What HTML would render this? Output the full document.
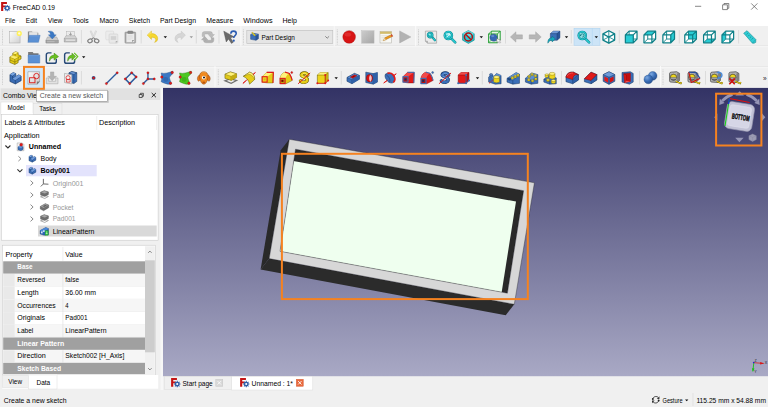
<!DOCTYPE html>
<html lang="en"><head><meta charset="utf-8"><title>FreeCAD 0.19</title>
<style>
html,body{margin:0;padding:0;background:#f0f0f0;overflow:hidden}
body{width:768px;height:407px;font-family:'Liberation Sans', 'DejaVu Sans', sans-serif;}
svg{display:block;font-family:'Liberation Sans', 'DejaVu Sans', sans-serif;}
text{white-space:pre}
</style></head><body>
<svg width="768" height="407" viewBox="0 0 768 407">
<defs>
<linearGradient id="bg3d" x1="0" y1="0" x2="0" y2="1"><stop offset="0" stop-color="#333365"/><stop offset="1" stop-color="#a9a9c5"/></linearGradient>
</defs>
<rect x="0" y="0" width="768" height="407" fill="#f0f0f0"/>
<g id="titlebar">
<rect x="0" y="0" width="768" height="26" fill="#ffffff"/>
<g transform="translate(0.8 1.7) scale(0.3063)"><path d="M1 1h19v6.500h-12v5h8v6h-8v11.500h-7z" fill="#c41414"/><g transform="translate(21 21)"><circle r="7.800" fill="#2f5fa8"/><path d="M0-10.500v21M-10.500 0h21M-7.400-7.400l14.800 14.800M7.400-7.400l-14.800 14.800" stroke="#2f5fa8" stroke-width="3.400"/><circle r="3.400" fill="#fff"/></g></g>
<text x="12.8" y="9.6" font-size="7.2" fill="#000" textLength="42.2" lengthAdjust="spacingAndGlyphs">FreeCAD 0.19</text>
<line x1="695" y1="6.3" x2="701.2" y2="6.3" stroke="#555" stroke-width="0.7"/>
<path d="M722.6 4.8h4.8v4.8h-4.8z M724 4.8v-1.3h4.8v4.8h-1.4" fill="none" stroke="#555" stroke-width="0.7"/>
<path d="M751.2 3.4l6.2 6.2M757.4 3.4l-6.2 6.2" fill="none" stroke="#555" stroke-width="0.7"/>
</g>
<g id="menubar">
<text x="5.0" y="22.5" font-size="7.2" fill="#000" textLength="10.3" lengthAdjust="spacingAndGlyphs">File</text>
<text x="25.8" y="22.5" font-size="7.2" fill="#000" textLength="11.2" lengthAdjust="spacingAndGlyphs">Edit</text>
<text x="47.8" y="22.5" font-size="7.2" fill="#000" textLength="14.7" lengthAdjust="spacingAndGlyphs">View</text>
<text x="72.8" y="22.5" font-size="7.2" fill="#000" textLength="15.9" lengthAdjust="spacingAndGlyphs">Tools</text>
<text x="99.5" y="22.5" font-size="7.2" fill="#000" textLength="19.2" lengthAdjust="spacingAndGlyphs">Macro</text>
<text x="128.8" y="22.5" font-size="7.2" fill="#000" textLength="21.2" lengthAdjust="spacingAndGlyphs">Sketch</text>
<text x="160.0" y="22.5" font-size="7.2" fill="#000" textLength="36.0" lengthAdjust="spacingAndGlyphs">Part Design</text>
<text x="206.3" y="22.5" font-size="7.2" fill="#000" textLength="27.0" lengthAdjust="spacingAndGlyphs">Measure</text>
<text x="243.3" y="22.5" font-size="7.2" fill="#000" textLength="29.2" lengthAdjust="spacingAndGlyphs">Windows</text>
<text x="282.5" y="22.5" font-size="7.2" fill="#000" textLength="14.5" lengthAdjust="spacingAndGlyphs">Help</text>
</g>
<g id="toolbars">
<line x1="0" y1="45.9" x2="768" y2="45.9" stroke="#dcdcdc" stroke-width="0.6"/>
<line x1="0" y1="46.6" x2="768" y2="46.6" stroke="#fbfbfb" stroke-width="0.7"/>
<line x1="0" y1="66.9" x2="768" y2="66.9" stroke="#dcdcdc" stroke-width="0.6"/>
<line x1="0" y1="67.6" x2="768" y2="67.6" stroke="#fbfbfb" stroke-width="0.7"/>
<line x1="2.5" y1="29.5" x2="2.5" y2="44.5" stroke="#bcbcbc" stroke-width="0.8" stroke-dasharray="0.8 0.8"/>
<g transform="translate(8.65 30.3) scale(0.4156)"><defs><linearGradient id="gnew" x1="0" y1="0" x2="1" y2="1"><stop offset="0" stop-color="#fcfcfc"/><stop offset="1" stop-color="#d0d0d0"/></linearGradient></defs><rect x="2.500" y="3" width="25" height="27.500" fill="url(#gnew)" stroke="#b0b0b0" stroke-width="1.400"/><circle cx="25.500" cy="7.500" r="6.200" fill="#fff15a"/><circle cx="25.500" cy="7.500" r="2.800" fill="#fffbd8"/></g>
<g transform="translate(27.05 30.3) scale(0.4156)"><path d="M2 3h10l2 3h13v20h-25z" fill="#858585"/><path d="M5 4.500h20v12h-20z" fill="#f4f4f4" stroke="#bcbcbc" stroke-width=".8"/><path d="M6 7h18M6 9.500h18" stroke="#c8c8c8" stroke-width=".8"/><path d="M5.500 12h26l-4 17h-25.500z" fill="#5b90d4" stroke="#3a6db0" stroke-width="1"/><path d="M6.500 13.500h23" stroke="#8ab4ea" stroke-width="1"/></g>
<g transform="translate(45.45 30.3) scale(0.4156)"><path d="M5 16h22l4 8v6.500h-30v-6.500z" fill="#cacaca" stroke="#8e8e8e" stroke-width="1"/><rect x="1.500" y="24" width="29" height="6.500" fill="#a4a4a4" stroke="#868686" stroke-width=".8"/><path d="M4 27.500h18" stroke="#d8d8d8" stroke-width="1.200"/><path d="M6 3c9-3 15 1 15 8h5l-9.500 10l-9.500-10h5c0-4-1.500-6.500-6-8z" fill="#3b78c4" stroke="#2a5a9a" stroke-width=".8"/></g>
<g transform="translate(63.85 30.3) scale(0.4156)"><rect x="7" y="3" width="18" height="12" fill="#ececec" stroke="#a8a8a8" stroke-width="1"/><path d="M16 5v6.500M12.500 8.500l3.500 3.500l3.500-3.500" stroke="#8a8a8a" stroke-width="1.800" fill="none"/><path d="M5 13h22l4 7v8h-30v-8z" fill="#d4d4d4" stroke="#969696" stroke-width="1"/><rect x="1.500" y="20" width="29" height="8" fill="#c0c0c0" stroke="#969696" stroke-width=".8"/><rect x="5" y="22.500" width="22" height="2.200" fill="#f2f2f2"/></g>
<line x1="81.4" y1="30" x2="81.4" y2="43.5" stroke="#d2d2d2" stroke-width="0.7"/>
<g transform="translate(86.7 30.3) scale(0.4156)"><path d="M8 2l3-1l8 19l-3 1z" fill="#e0e0e0" stroke="#c0c0c0" stroke-width=".8"/><path d="M24 2l-3-1l-8 19l3 1z" fill="#e6e6e6" stroke="#c0c0c0" stroke-width=".8"/><ellipse cx="8" cy="25.500" rx="5.500" ry="4.500" transform="rotate(-25 8 25.500)" fill="none" stroke="#7e7e7e" stroke-width="2.800"/><ellipse cx="24" cy="25.500" rx="5.500" ry="4.500" transform="rotate(25 24 25.500)" fill="none" stroke="#7e7e7e" stroke-width="2.800"/><path d="M12 21l4-3l4 3" stroke="#7e7e7e" stroke-width="2.400" fill="none"/></g>
<g transform="translate(104.95 30.3) scale(0.4156)"><rect x="2" y="2" width="19" height="21" rx="2" fill="#ececec" stroke="#d2d2d2" stroke-width="1.200"/><rect x="10" y="9" width="21" height="22" rx="2" fill="#e8e8e8" stroke="#cacaca" stroke-width="1.200"/><rect x="14" y="14" width="13" height="9" fill="#d2d2d2"/><path d="M31 26l-5 5v-5z" fill="#b0b0b0"/></g>
<g transform="translate(123.65 30.3) scale(0.4156)"><rect x="3" y="4" width="26" height="27" rx="2" fill="#a4a4a4" stroke="#8c8c8c" stroke-width="1"/><rect x="6.500" y="8" width="19" height="20.500" fill="#ebebeb" stroke="#c8c8c8" stroke-width=".8"/><path d="M9 13h13M9 16h13M9 19h13M9 22h8" stroke="#d4d4d4" stroke-width="1"/><path d="M25.500 23.500l-5 5v-5z" fill="#909090"/><rect x="10" y="1.500" width="12" height="6" rx="1.500" fill="#8a8a8a" stroke="#6e6e6e" stroke-width=".8"/></g>
<line x1="141.2" y1="30" x2="141.2" y2="43.5" stroke="#d2d2d2" stroke-width="0.7"/>
<g transform="translate(146.05 30.3) scale(0.4156)"><path d="M3 11.500l10-9.500v6c9 0 15 5 15 12c0 5-3 8-7.500 9c2-2 3-4 3-6c0-4-4-6.500-10.500-6.500v5.500z" fill="#f6d830" stroke="#d0aa00" stroke-width="1"/><path d="M5 11.500l7-6.500v4" fill="none" stroke="#fff4a0" stroke-width="1.200"/></g>
<path d="M163.60000000000002 36.300000000000004h3.4l-1.7 1.9z" fill="#111"/>
<g transform="translate(173.35 30.3) scale(0.4156)"><path d="M29 11.500l-10-9.500v6c-9 0-15 5-15 12c0 5 3 8 7.500 9c-2-2-3-4-3-6c0-4 4-6.500 10.500-6.500v5.500z" fill="#d6d6d6" stroke="#c0c0c0" stroke-width="1"/></g>
<path d="M189.60000000000002 36.300000000000004h3.4l-1.7 1.9z" fill="#9a9a9a"/>
<line x1="196.3" y1="30" x2="196.3" y2="43.5" stroke="#d2d2d2" stroke-width="0.7"/>
<g transform="translate(201.35 30.3) scale(0.4156)"><path d="M2 15V9Q2 3 8 3H21Q27 3 27 9V10H31.500L24 18.500L16.500 10H21V9.500Q21 9 20.500 9H8.500Q8 9 8 9.500V15Z" fill="#bcbcbc" stroke="#a0a0a0" stroke-width=".8"/><path d="M2 15V9Q2 3 8 3H21Q27 3 27 9V10H31.500L24 18.500L16.500 10H21V9.500Q21 9 20.500 9H8.500Q8 9 8 9.500V15Z" transform="rotate(180 16 16.500)" fill="#b0b0b0" stroke="#989898" stroke-width=".8"/></g>
<line x1="219" y1="30" x2="219" y2="43.5" stroke="#d2d2d2" stroke-width="0.7"/>
<g transform="translate(223.35 30.3) scale(0.4156)"><path d="M1 2l6 26l5.500-7l7 10.500l4.500-3l-7-10.500l8.500-2.500z" fill="#6a6a6a" stroke="#484848" stroke-width="1"/><path d="M18 8.500c0-4.500 3-6.500 6.500-6.500c4 0 6.500 2.500 6.500 6c0 5-6 5-6 10.500" fill="none" stroke="#2c5cb0" stroke-width="3.800"/><circle cx="25" cy="25" r="2.600" fill="#2c5cb0"/></g>
<line x1="240.9" y1="26" x2="240.9" y2="46.3" stroke="#fdfdfd" stroke-width="0.8"/>
<line x1="243.4" y1="29.5" x2="243.4" y2="44.5" stroke="#bcbcbc" stroke-width="0.8" stroke-dasharray="0.8 0.8"/>
<rect x="246.8" y="30.3" width="86" height="13.4" fill="#e5e5e5" stroke="#bdbdbd" stroke-width="0.6"/>
<g transform="translate(250.3 32.3) scale(0.2687)"><path d="M1 9l9-5l20 3v17l-9 6l-20-4z" fill="#3b6fb8" stroke="#1f3f70" stroke-width="1.500"/><path d="M1 9l20 4l9-6l-20-3z" fill="#5b8fd4" stroke="#1f3f70" stroke-width="1"/><path d="M21 13v17" stroke="#1f3f70" stroke-width="1.500"/><path d="M5 1l4-1l10 10l-1 4l-4-1z" fill="#f0d820" stroke="#8a7a00" stroke-width="1"/><path d="M21 13l9-6v17l-9 6z" fill="#2a5596"/></g>
<text x="261.5" y="39.5" font-size="7.2" fill="#000" textLength="33.4" lengthAdjust="spacingAndGlyphs">Part Design</text>
<path d="M325.3 36.3l1.9 1.9l1.9-1.9" fill="none" stroke="#444" stroke-width="0.6"/>
<line x1="334.2" y1="26" x2="334.2" y2="46.3" stroke="#fdfdfd" stroke-width="0.8"/>
<line x1="337.3" y1="29.5" x2="337.3" y2="44.5" stroke="#bcbcbc" stroke-width="0.8" stroke-dasharray="0.8 0.8"/>
<g transform="translate(342.5 30.3) scale(0.4156)"><circle cx="16" cy="16" r="15.200" fill="#d81414" stroke="#a80c0c" stroke-width="1"/><ellipse cx="13" cy="10" rx="8" ry="5" fill="#e83a3a" opacity=".6"/></g>
<g transform="translate(361.2 30.3) scale(0.4156)"><defs><linearGradient id="gstop" x1="0" y1="0" x2="1" y2="1"><stop offset="0" stop-color="#cccccc"/><stop offset="1" stop-color="#a6a6a6"/></linearGradient></defs><rect x="1" y="1" width="30" height="30" fill="url(#gstop)" stroke="#bdbdbd" stroke-width="1"/></g>
<g transform="translate(379.6 30.3) scale(0.4156)"><rect x="1" y="3" width="28" height="27.500" fill="#f8f8f4" stroke="#aaa8a0" stroke-width="1.200"/><rect x="1" y="3" width="28" height="5.500" fill="#d2bc6c"/><path d="M4 13h21M4 17h21M4 21h14M4 25h12" stroke="#cfcab6" stroke-width="1"/><path d="M9 25l3.500-7l17-8l2 4.500l-17 8z" fill="#ec9a1c" stroke="#9a5c10" stroke-width="1"/><path d="M9 25l3.500-7l2 4.500z" fill="#f2dcb4"/><path d="M27 11l2.500-1l2 4.500l-2.500 1z" fill="#d43c3c"/></g>
<g transform="translate(398.4 30.3) scale(0.4156)"><path d="M3 1.500l27 14.500l-27 14.500z" fill="#b2b2b2" stroke="#a2a2a2" stroke-width="1"/></g>
<line x1="415.7" y1="26" x2="415.7" y2="46.3" stroke="#fdfdfd" stroke-width="0.8"/>
<line x1="418.5" y1="29.5" x2="418.5" y2="44.5" stroke="#bcbcbc" stroke-width="0.8" stroke-dasharray="0.8 0.8"/>
<g transform="translate(424.55 30.3) scale(0.4156)"><path d="M2 2h27v29h-22l-5-5z" fill="#ececec" stroke="#8e8e8e" stroke-width="1.400"/><path d="M2 26h5v5" fill="#bbb" stroke="#8e8e8e" stroke-width="1"/><path d="M17.7 15.7L25 24" stroke="#0e8088" stroke-width="5.2" stroke-linecap="round"/><path d="M17.7 15.7L25 24" stroke="#28c8d0" stroke-width="3.0" stroke-linecap="round"/><circle cx="13.5" cy="11.5" r="6" fill="#34ccd4" stroke="#0e8088" stroke-width="4.2"/><circle cx="13.5" cy="11.5" r="6" fill="none" stroke="#28c8d0" stroke-width="2.2"/><ellipse cx="12.0" cy="9.4" rx="2.7" ry="1.8" fill="#a8f0f4" opacity=".8"/></g>
<g transform="translate(443.15 30.3) scale(0.4156)"><path d="M18.9 18.9L29 29" stroke="#0e8088" stroke-width="6.2" stroke-linecap="round"/><path d="M18.9 18.9L29 29" stroke="#28c8d0" stroke-width="4.0" stroke-linecap="round"/><circle cx="12.5" cy="12.5" r="9" fill="#34ccd4" stroke="#0e8088" stroke-width="5.2"/><circle cx="12.5" cy="12.5" r="9" fill="none" stroke="#28c8d0" stroke-width="3.2"/><ellipse cx="10.2" cy="9.3" rx="4.0" ry="2.7" fill="#a8f0f4" opacity=".8"/><path d="M8 17l8-8M16.500 8.500h-5M16.500 8.500v5" stroke="#fff" stroke-width="2" fill="none"/></g>
<g transform="translate(461.75 30.3) scale(0.4156)"><path d="M16 0.500l14 7.800v15.400l-14 7.800l-14-7.800v-15.400z" fill="#2cc8d0" stroke="#0a8088" stroke-width="1.400"/><path d="M16 0.500l14 7.800l-14 7.700l-14-7.700z" fill="#62dce2"/><circle cx="16" cy="16" r="9.500" fill="none" stroke="#b01414" stroke-width="3.600"/><path d="M9.300 9.300l13.400 13.400" stroke="#b01414" stroke-width="3.600"/></g>
<path d="M479.6 36.300000000000004h3.4l-1.7 1.9z" fill="#111"/>
<g transform="translate(487.75 30.3) scale(0.4156)"><path d="M2 9l7-7h21v21l-7 7h-21z" fill="#e4f4e4" stroke="#189a28" stroke-width="2.200"/><path d="M9 2v21h21M9 23l-7 7" fill="none" stroke="#189a28" stroke-width="1.400"/><path d="M2 9h21v21M23 9l7-7" fill="none" stroke="#189a28" stroke-width="2.200"/><path d="M6 13c3-5 13-5 16 0c2 4 1 11-4 13c-5 1-11-1-12-5c-1-3-1-6 0-8z" fill="#3568b4" stroke="#1f3f70" stroke-width="1"/><ellipse cx="12" cy="14" rx="4" ry="2.500" fill="#6f9ad8" opacity=".7"/><path d="M21 20l2.500 11l2.500-3.500l3 3.500l2-2l-3-3.500l3.500-2z" fill="#fff" stroke="#444" stroke-width=".8"/></g>
<line x1="505.5" y1="30" x2="505.5" y2="43.5" stroke="#d2d2d2" stroke-width="0.7"/>
<g transform="translate(509.75 30.3) scale(0.4156)"><path d="M1.500 16l13.500-12.500v7.500h15.500v10h-15.500v7.500z" fill="#b6b6b6" stroke="#a6a6a6" stroke-width="1"/></g>
<g transform="translate(528.55 30.3) scale(0.4156)"><path d="M30.500 16l-13.500-12.500v7.500h-15.500v10h15.500v7.500z" fill="#b6b6b6" stroke="#a6a6a6" stroke-width="1"/></g>
<g transform="translate(547.05 30.3) scale(0.4156)"><path d="M8 8l7-6h16v16l-7 6h-16z" fill="#3b6fb8" stroke="#1f3f70" stroke-width="1.200"/><path d="M8 8l7-6h16l-7 6z" fill="#6f9ad8"/><path d="M24 8l7-6v16l-7 6z" fill="#2a5596"/><path d="M8 8h16v16M24 8l7-6" fill="none" stroke="#1f3f70" stroke-width="1.200"/><path d="M2 31c-1-8 3-13 10-13v-4l8 7l-8 7v-4c-4 0-7 2-10 7z" fill="#18a8bc" stroke="#0a6070" stroke-width="1"/></g>
<path d="M564.8 36.300000000000004h3.4l-1.7 1.9z" fill="#111"/>
<line x1="571.3" y1="30" x2="571.3" y2="43.5" stroke="#d2d2d2" stroke-width="0.7"/>
<rect x="574" y="28.3" width="26" height="17" fill="#cce4f7" stroke="#a8d0f0" stroke-width="0.5"/>
<line x1="592.3" y1="28.5" x2="592.3" y2="45" stroke="#a8d0f0" stroke-width="0.5"/>
<g transform="translate(577.05 30.3) scale(0.4156)"><path d="M18.9 18.9L29 29" stroke="#0e8088" stroke-width="6.2" stroke-linecap="round"/><path d="M18.9 18.9L29 29" stroke="#28c8d0" stroke-width="4.0" stroke-linecap="round"/><circle cx="12.5" cy="12.5" r="9" fill="#8adce2" stroke="#0e8088" stroke-width="5.2"/><circle cx="12.5" cy="12.5" r="9" fill="none" stroke="#28c8d0" stroke-width="3.2"/><ellipse cx="10.2" cy="9.3" rx="4.0" ry="2.7" fill="#a8f0f4" opacity=".8"/><path d="M8.500 12.500a4 4 0 1 1 4 4" stroke="#0a7078" stroke-width="1.800" fill="none"/><path d="M6 11l2.500 3.500l2.500-3.500z" fill="#0a7078"/></g>
<path d="M594.5999999999999 36.300000000000004h3.4l-1.7 1.9z" fill="#111"/>
<g transform="translate(602.15 30.3) scale(0.4156)"><path d="M16 1l14 7.500v15l-14 7.500l-14-7.500v-15z" fill="#fff" stroke="#0e8088" stroke-width="3.200" stroke-linejoin="round"/><path d="M2 8.500l14 7.500l14-7.500M16 16v15" fill="none" stroke="#0e8088" stroke-width="3"/><path d="M16 1v15M2 23.500l14-7.500l14 7.500" fill="none" stroke="#0e8088" stroke-width="2"/></g>
<line x1="619.3" y1="30" x2="619.3" y2="43.5" stroke="#d2d2d2" stroke-width="0.7"/>
<g transform="translate(624.55 30.3) scale(0.4156)"><path d="M2 11l9-9h19v19l-9 9h-19z" fill="#ffffff"/><path d="M11 2v19h19M11 21l-9 9" fill="none" stroke="#0e8088" stroke-width="2.200"/><path d="M2 11h19v19h-19z" fill="#28ccd4"/><path d="M2 11l9-9h19v19l-9 9h-19z M2 11h19v19M21 11l9-9" fill="none" stroke="#0e8088" stroke-width="3" stroke-linejoin="round"/></g>
<g transform="translate(643.15 30.3) scale(0.4156)"><path d="M2 11l9-9h19v19l-9 9h-19z" fill="#ffffff"/><path d="M11 2v19h19M11 21l-9 9" fill="none" stroke="#0e8088" stroke-width="2.200"/><path d="M2 11l9-9h19l-9 9z" fill="#28ccd4"/><path d="M2 11l9-9h19v19l-9 9h-19z M2 11h19v19M21 11l9-9" fill="none" stroke="#0e8088" stroke-width="3" stroke-linejoin="round"/></g>
<g transform="translate(662.05 30.3) scale(0.4156)"><path d="M2 11l9-9h19v19l-9 9h-19z" fill="#ffffff"/><path d="M11 2v19h19M11 21l-9 9" fill="none" stroke="#0e8088" stroke-width="2.200"/><path d="M21 11l9-9v19l-9 9z" fill="#28ccd4"/><path d="M2 11l9-9h19v19l-9 9h-19z M2 11h19v19M21 11l9-9" fill="none" stroke="#0e8088" stroke-width="3" stroke-linejoin="round"/></g>
<line x1="679.3" y1="30" x2="679.3" y2="43.5" stroke="#d2d2d2" stroke-width="0.7"/>
<g transform="translate(683.95 30.3) scale(0.4156)"><path d="M2 11l9-9h19v19l-9 9h-19z" fill="#ffffff"/><path d="M11 2h19v19h-19z" fill="#28ccd4"/><path d="M11 2v19h19M11 21l-9 9" fill="none" stroke="#0e8088" stroke-width="2.200"/><path d="M2 11l9-9h19v19l-9 9h-19z M2 11h19v19M21 11l9-9" fill="none" stroke="#0e8088" stroke-width="3" stroke-linejoin="round"/></g>
<g transform="translate(702.75 30.3) scale(0.4156)"><path d="M2 11l9-9h19v19l-9 9h-19z" fill="#ffffff"/><path d="M2 30l9-9h19l-9 9z" fill="#28ccd4"/><path d="M11 2v19h19M11 21l-9 9" fill="none" stroke="#0e8088" stroke-width="2.200"/><path d="M2 11l9-9h19v19l-9 9h-19z M2 11h19v19M21 11l9-9" fill="none" stroke="#0e8088" stroke-width="3" stroke-linejoin="round"/></g>
<g transform="translate(721.15 30.3) scale(0.4156)"><path d="M2 11l9-9h19v19l-9 9h-19z" fill="#ffffff"/><path d="M2 11l9-9v19l-9 9z" fill="#28ccd4"/><path d="M11 2v19h19M11 21l-9 9" fill="none" stroke="#0e8088" stroke-width="2.200"/><path d="M2 11l9-9h19v19l-9 9h-19z M2 11h19v19M21 11l9-9" fill="none" stroke="#0e8088" stroke-width="3" stroke-linejoin="round"/></g>
<line x1="738.6" y1="30" x2="738.6" y2="43.5" stroke="#d2d2d2" stroke-width="0.7"/>
<g transform="translate(743.3 30.3) scale(0.4156)"><path d="M1 7l8-6l21 21v7l-4 2h-4z" fill="#30ccd4" stroke="#0e8a92" stroke-width="1.400"/><path d="M22 31l8-9" stroke="#0e8a92" stroke-width="1"/><path d="M11 7l-3 3M15 11l-3 3M19 15l-3 3M23 19l-3 3" stroke="#0e6a72" stroke-width="1.300"/></g>
<line x1="2.5" y1="49.5" x2="2.5" y2="64.5" stroke="#bcbcbc" stroke-width="0.8" stroke-dasharray="0.8 0.8"/>
<g transform="translate(9 50.8) scale(0.4156)"><path d="M2 15l7-4v-5l7-4l6 2.500v5l7 3v7l-7 4v5l-8 4.500l-12-5z" fill="#e4cc18" stroke="#5e5200" stroke-width="1.300"/><path d="M9 6l6 2.500l7-4M15 8.500v5.500M2 15l12 5l8-4.500M14 20v13M9 11l6 3M22 15.500l7-3M2 22l12 5l8-4M22 15v8" fill="none" stroke="#5e5200" stroke-width="1"/><path d="M9 6l7-4l6 2.500l-7 4z" fill="#fff27a"/><path d="M2 15l7-4l13 4.500l-8 4.500z" fill="#fff27a" opacity=".85"/></g>
<g transform="translate(27.3 50.8) scale(0.4156)"><path d="M2 3h11l2 3h12v8h-25z" fill="#7a7a7a"/><path d="M2 10h28v19.500h-28z" fill="#5b90d4" stroke="#3a6db0" stroke-width="1"/><path d="M3 11.500h26" stroke="#8ab4ea" stroke-width="1"/></g>
<g transform="translate(45.7 50.8) scale(0.4156)"><path d="M14 5h-8a4.500 4.500 0 0 0-4.500 4.500v16a4.500 4.500 0 0 0 4.500 4.500h15a4.500 4.500 0 0 0 4.500-4.500v-6" fill="none" stroke="#284a78" stroke-width="3.400"/><path d="M9 25c-1-10 4-14 11-14v-5.500l11 8.500l-11 8.500v-5.500c-5 0-8 2-11 8z" fill="#68c020" stroke="#3a7a10" stroke-width="1"/></g>
<g transform="translate(64 50.8) scale(0.4156)"><path d="M14 5h-8a4.500 4.500 0 0 0-4.500 4.500v16a4.500 4.500 0 0 0 4.500 4.500h15a4.500 4.500 0 0 0 4.500-4.500v-6" fill="none" stroke="#284a78" stroke-width="3.400"/><path d="M9 25c-1-10 4-14 10-14v-5.500l9 8.500l-9 8.500v-5.500c-4 0-7 2-10 8z" fill="#68c020" stroke="#3a7a10" stroke-width="1"/><path d="M24.500 5l8.500 9l-8.500 9" fill="none" stroke="#68c020" stroke-width="3"/></g>
<path d="M82.0 56.300000000000004h3.4l-1.7 1.9z" fill="#111"/>
<line x1="2.5" y1="69.5" x2="2.5" y2="85.5" stroke="#bcbcbc" stroke-width="0.8" stroke-dasharray="0.8 0.8"/>
<rect x="24.6" y="67.6" width="18.8" height="20.4" fill="#d3e7f8"/>
<g transform="translate(8.7 71.3) scale(0.4156)"><path d="M3 8l8-5l6 2.500v7l7-4l6 3v11l-14 8l-13-6z" fill="#3a6cb4" stroke="#12305c" stroke-width="1.400"/><path d="M3 8l6 3l8-5.500M9 11v7l7 3.500l8-4.500M16 21.500v9M9 18l8-5.500" fill="none" stroke="#12305c" stroke-width="1.100"/><path d="M3 8l8-5l6 2.500l-8 5.500z" fill="#78a4e0"/><path d="M9 18l8-5.500l7-4l6 3l-14 10z" fill="#6f9ad8"/></g>
<g transform="translate(27.1 71.3) scale(0.4156)"><defs><linearGradient id="gsk" x1="0" y1="0" x2="1" y2="1"><stop offset="0" stop-color="#fbfbfb"/><stop offset="1" stop-color="#cccccc"/></linearGradient></defs><path d="M2 1h28v24l-6 6h-22z" fill="url(#gsk)" stroke="#8e8e8e" stroke-width="1.300"/><path d="M30 25h-6v6z" fill="#777" stroke="#666" stroke-width=".6"/><rect x="6" y="15.500" width="13" height="12" fill="none" stroke="#d81c1c" stroke-width="2.200"/><circle cx="22.500" cy="11.500" r="6.500" fill="none" stroke="#d81c1c" stroke-width="2.200"/></g>
<g transform="translate(45.5 71.3) scale(0.4156)"><path d="M12 1.500h8v10.500h6.500l-10.500 10.500l-10.500-10.500h6.500z" fill="#b4b4b4" stroke="#9e9e9e" stroke-width="1"/><path d="M2 16v14h28v-14h-5.500v8h-17v-8z" fill="#e2e2e2" stroke="#a4a4a4" stroke-width="1.300"/></g>
<g transform="translate(63.9 71.3) scale(0.4156)"><path d="M12 4l7-3.500l12 3v21l-7 5l-12-3z" fill="#3b6fb8" stroke="#12305c" stroke-width="1.200"/><path d="M12 4l12 3.500l7-4l-12-3z" fill="#6f9ad8" stroke="#12305c" stroke-width="1"/><path d="M24 7.500v22" stroke="#12305c" stroke-width="1"/><path d="M1.500 5l17.500 3.500v22l-17.500-3.500z" fill="#f0f0f0" stroke="#8a8a8a" stroke-width="1.200"/><circle cx="10" cy="15.500" r="5" fill="none" stroke="#d81818" stroke-width="1.800"/><path d="M6 19.500h9v6.500h-9z" fill="none" stroke="#d81818" stroke-width="1.600"/></g>
<line x1="81.4" y1="71" x2="81.4" y2="84.5" stroke="#d2d2d2" stroke-width="0.7"/>
<g transform="translate(86.75 71.3) scale(0.4156)"><circle cx="16.500" cy="16" r="4.600" fill="#2e5c9e"/><circle cx="16.5" cy="16" r="2.8" fill="#e41a1a" stroke="#8a0a0a" stroke-width=".7"/></g>
<g transform="translate(105.15 71.3) scale(0.4156)"><path d="M3 29.500l26-26" stroke="#2e5c9e" stroke-width="3.200"/><circle cx="3" cy="29.5" r="2.7" fill="#e41a1a" stroke="#8a0a0a" stroke-width=".7"/><circle cx="29" cy="3.5" r="2.7" fill="#e41a1a" stroke="#8a0a0a" stroke-width=".7"/></g>
<g transform="translate(123.55 71.3) scale(0.4156)"><path d="M4.300 18.500l15.200-15l10.800 10l-15.400 16z" fill="none" stroke="#2e5c9e" stroke-width="3.600"/><circle cx="4.3" cy="18.5" r="2.7" fill="#e41a1a" stroke="#8a0a0a" stroke-width=".7"/><circle cx="19.5" cy="3.5" r="2.7" fill="#e41a1a" stroke="#8a0a0a" stroke-width=".7"/><circle cx="30.3" cy="13.5" r="2.7" fill="#e41a1a" stroke="#8a0a0a" stroke-width=".7"/><circle cx="14.9" cy="29.5" r="2.7" fill="#e41a1a" stroke="#8a0a0a" stroke-width=".7"/></g>
<g transform="translate(141.95 71.3) scale(0.4156)"><path d="M14.400 18.500v-15M14.400 18.500l-11 11M14.400 18.500h15.200" stroke="#2e5c9e" stroke-width="3.200" fill="none"/><circle cx="14.4" cy="3.5" r="2.7" fill="#e41a1a" stroke="#8a0a0a" stroke-width=".7"/><circle cx="3.4" cy="29.5" r="2.7" fill="#e41a1a" stroke="#8a0a0a" stroke-width=".7"/><circle cx="29.6" cy="18.5" r="2.7" fill="#e41a1a" stroke="#8a0a0a" stroke-width=".7"/><circle cx="14.4" cy="18.5" r="2.7" fill="#e41a1a" stroke="#8a0a0a" stroke-width=".7"/></g>
<g transform="translate(160.35 71.3) scale(0.4156)"><path d="M2 4C10 7 20 3 30 0C32 8 22 11 22 15C22 20 26 24 26 31C18 32 9 29 2 25C4 18 4 11 2 4Z" fill="#3b78c4" stroke="#1f4a80" stroke-width="1"/><ellipse cx="13" cy="20" rx="6" ry="6" fill="#2a5aa0" opacity=".5"/><circle cx="28.5" cy="3" r="3" fill="#e41a1a" stroke="#8a0a0a" stroke-width=".7"/><circle cx="3.5" cy="14" r="3" fill="#e41a1a" stroke="#8a0a0a" stroke-width=".7"/><circle cx="24.5" cy="28.5" r="3" fill="#e41a1a" stroke="#8a0a0a" stroke-width=".7"/></g>
<g transform="translate(178.75 71.3) scale(0.4156)"><path d="M2 4C10 7 20 3 30 0C32 8 22 11 22 15C22 20 26 24 26 31C18 32 9 29 2 25C4 18 4 11 2 4Z" fill="#4cc820" stroke="#1a7a0a" stroke-width="1"/><ellipse cx="13" cy="20" rx="6" ry="6" fill="#30a010" opacity=".5"/><circle cx="28.5" cy="3" r="3" fill="#e41a1a" stroke="#8a0a0a" stroke-width=".7"/><circle cx="3.5" cy="14" r="3" fill="#e41a1a" stroke="#8a0a0a" stroke-width=".7"/><circle cx="24.5" cy="28.5" r="3" fill="#e41a1a" stroke="#8a0a0a" stroke-width=".7"/></g>
<g transform="translate(197.15 71.3) scale(0.4156)"><path d="M5 9c-5 4-6 11-2 15l5-3l2-9z" fill="#e87818" stroke="#7a3400" stroke-width="1"/><path d="M27 9c5 4 6 11 2 15l-5-3l-2-9z" fill="#e87818" stroke="#7a3400" stroke-width="1"/><path d="M16 1c7 0 11 5 10 12c-1 9-4 18-10 18s-9-9-10-18c-1-7 3-12 10-12z" fill="#f08a20" stroke="#7a3400" stroke-width="1"/><path d="M11 3c3-1.500 7-1.500 10 0" stroke="#f8b060" stroke-width="1.500" fill="none"/><ellipse cx="16" cy="15" rx="4.500" ry="4.500" fill="#fff"/><circle cx="16.500" cy="15" r="2.600" fill="#1a1a1a"/><ellipse cx="16" cy="27" rx="3.500" ry="2.500" fill="#b85410"/></g>
<line x1="215" y1="66" x2="215" y2="87.3" stroke="#fdfdfd" stroke-width="0.8"/>
<line x1="218.3" y1="69.5" x2="218.3" y2="85.5" stroke="#bcbcbc" stroke-width="0.8" stroke-dasharray="0.8 0.8"/>
<g transform="translate(224.1 71.3) scale(0.4156)"><path d="M2 23l13-5l15 4l-13 7z" fill="none" stroke="#707070" stroke-width="3"/><path d="M2 7l13-5.500l15 4.500v9l-13 7l-15-5z" fill="#e0c818" stroke="#5e5200" stroke-width="1.200"/><path d="M2 7l13-5.500l15 4.500l-13 6z" fill="#fff27a" stroke="#5e5200" stroke-width=".8"/><path d="M17 12v10" stroke="#5e5200" stroke-width="1"/><path d="M17 12l13-6v9l-13 7z" fill="#c4ac10"/></g>
<g transform="translate(242.5 71.3) scale(0.4156)"><path d="M1 29l30-26" stroke="#e01a1a" stroke-width="2.200"/><path d="M2 12l15-10c8 2 13 9 12 18l-12 11c-1-8-7-15-15-19z" fill="#e4cc18" stroke="#5e5200" stroke-width="1.200"/><path d="M2 12l15-10c8 2 13 9 12 18c-2-7-7-12-14-13z" fill="#fff27a" stroke="#5e5200" stroke-width=".8"/><path d="M1 29l7-6M25 8l6-5" stroke="#e01a1a" stroke-width="2.200"/></g>
<g transform="translate(260.9 71.3) scale(0.4156)"><path d="M3 13l11-10.500h16l-1 25.500h-14l-12-2z" fill="#e4cc18" stroke="#5e5200" stroke-width="1"/><path d="M3 13l11-10.500h16l-15 10.500z" fill="#fff27a"/><path d="M14 2.500h16l-1 25.500" fill="none" stroke="#e01a1a" stroke-width="2.600"/><rect x="3" y="13" width="12" height="13" fill="#f0d820" stroke="#e01a1a" stroke-width="2.600"/><rect x="6.500" y="17" width="5" height="5" fill="#d8b818"/></g>
<g transform="translate(279.3 71.3) scale(0.4156)"><path d="M2 17c1-8 5-13 12-15l10 3c3 5 6 11 7 17l-15 8h-14z" fill="#e4cc18" stroke="#5e5200" stroke-width="1"/><path d="M2 17c1-8 5-13 12-15l10 3c-5 2-8 7-9 12z" fill="#fff27a"/><path d="M14 2l10 3c3 5 6 11 7 17" fill="none" stroke="#e01a1a" stroke-width="2.600"/><rect x="2" y="17" width="12" height="12.500" fill="#b89c10" stroke="#e01a1a" stroke-width="2.600"/><rect x="5" y="20.500" width="5" height="5" fill="#7a0000"/><circle cx="30" cy="3" r="2.4" fill="#e41a1a" stroke="#8a0a0a" stroke-width=".7"/></g>
<g transform="translate(297.7 71.3) scale(0.4156)"><path d="M24 9C22 3 11 2 9 8C7 14 23 13 23 20C23 27 11 29 7 23" fill="none" stroke="#5e5200" stroke-width="8.400" stroke-linecap="round"/><path d="M24 9C22 3 11 2 9 8C7 14 23 13 23 20C23 27 11 29 7 23" fill="none" stroke="#e4cc18" stroke-width="6.200" stroke-linecap="round"/><path d="M22 7C19 3.500 12 3.500 10.500 7.500M21.500 18C20 15 14 14 11 12" fill="none" stroke="#fff27a" stroke-width="1.800" stroke-linecap="round"/><path d="M1 30l29-26" stroke="#e01a1a" stroke-width="2.400"/></g>
<g transform="translate(316.1 71.3) scale(0.4156)"><path d="M3 9l7-6h19v19l-7 7h-19z" fill="#ecd41c" stroke="#5e5200" stroke-width="1.200"/><path d="M3 9l7-6h19l-7 6z" fill="#fff27a"/><path d="M22 9l7-6v19l-7 7z" fill="#c8b010"/><path d="M3 9h19v20M22 9l7-6" fill="none" stroke="#5e5200" stroke-width="1"/><path d="M22 9v20M3 29h19l7-7" stroke="#e01a1a" stroke-width="1.800" fill="none"/><circle cx="22" cy="9" r="2.400" fill="#e01a1a"/><circle cx="3" cy="29" r="2.400" fill="#e01a1a"/><circle cx="22" cy="29" r="2.400" fill="#e01a1a"/><circle cx="29" cy="22" r="2.400" fill="#e01a1a"/></g>
<path d="M334.5 77.3h3.4l-1.7 1.9z" fill="#111"/>
<line x1="341.3" y1="71" x2="341.3" y2="84.5" stroke="#d2d2d2" stroke-width="0.7"/>
<g transform="translate(346.55 71.3) scale(0.4156)"><path d="M1 15l18-10l12 5v9l-18 11l-12-6z" fill="#3b6fb8" stroke="#12305c" stroke-width="1.200"/><path d="M1 15l18-10l12 5l-18 10z" fill="#5b8fd4" stroke="#12305c" stroke-width=".8"/><path d="M13 20v10" stroke="#12305c" stroke-width="1"/><path d="M13 20l18-10v9l-18 11z" fill="#2f60a8"/><path d="M9 14l10-5.500l6 2.500l-10 6z" fill="#e01a1a" stroke="#7a0000" stroke-width="1"/><path d="M12.500 13.500l6-3l2.500 1l-6 3.300z" fill="#8a0000"/></g>
<g transform="translate(364.95 71.3) scale(0.4156)"><path d="M2 2l18 3.500l10-2.500v23l-10 5l-18-4z" fill="#3b6fb8" stroke="#12305c" stroke-width="1.200"/><path d="M20 5.500v25.500" stroke="#12305c" stroke-width="1"/><path d="M20 5.500l10-2.500v23l-10 5z" fill="#2f60a8"/><ellipse cx="11" cy="16.500" rx="7.500" ry="9" fill="#d81414" stroke="#7a0000" stroke-width="1"/><path d="M13 9c4 2 5 12 0 16c-4-3-4-13 0-16z" fill="#f4c4c4"/></g>
<g transform="translate(383.35 71.3) scale(0.4156)"><path d="M1 28l30-22" stroke="#e01a1a" stroke-width="2.200"/><path d="M5 7c6-5 14-3 19 3c4 6 4 13 0 17c-5 3-12 0-16-6c-4-5-5-10-3-14z" fill="#3b6fb8" stroke="#12305c" stroke-width="1.200"/><path d="M10 5c6-2 13 1 16 7c3 6 2 11-2 15" fill="none" stroke="#e01a1a" stroke-width="4"/><path d="M5 7c4 2 8 6 10 11c1 4 1 7-1 9" fill="none" stroke="#12305c" stroke-width="1"/><path d="M1 28l9-6.500M24 11.500l7-5.500" stroke="#e01a1a" stroke-width="2.200"/></g>
<g transform="translate(401.75 71.3) scale(0.4156)"><path d="M3 13l11-10.500h16l-1 25.500h-14l-12-2z" fill="#e01a1a" stroke="#7a0000" stroke-width="1"/><path d="M3 13l11-10.500h16l-15 10.500z" fill="#f24a4a"/><path d="M14 2.500h16l-1 25.500" fill="none" stroke="#3b6fb8" stroke-width="2.400"/><rect x="3" y="13" width="12" height="13" fill="#c81414" stroke="#3b6fb8" stroke-width="2.600"/><rect x="6.500" y="17" width="5" height="5" fill="#12305c"/></g>
<g transform="translate(420.15 71.3) scale(0.4156)"><path d="M2 17c1-8 5-13 12-15l10 3c3 5 6 11 7 17l-15 8h-14z" fill="#e01a1a" stroke="#7a0000" stroke-width="1"/><path d="M2 17c1-8 5-13 12-15l10 3c-5 2-8 7-9 12z" fill="#f24a4a"/><path d="M14 2l10 3c3 5 6 11 7 17" fill="none" stroke="#3b6fb8" stroke-width="2.400"/><rect x="2" y="17" width="12" height="12.500" fill="#b81010" stroke="#3b6fb8" stroke-width="2.600"/><rect x="5" y="20.500" width="5" height="5" fill="#12305c"/><circle cx="30" cy="3" r="2.400" fill="#3b6fb8" stroke="#12305c" stroke-width=".7"/></g>
<g transform="translate(438.55 71.3) scale(0.4156)"><path d="M24 9C22 3 11 2 9 8C7 14 23 13 23 20C23 27 11 29 7 23" fill="none" stroke="#12305c" stroke-width="8.400" stroke-linecap="round"/><path d="M24 9C22 3 11 2 9 8C7 14 23 13 23 20C23 27 11 29 7 23" fill="none" stroke="#3b6fb8" stroke-width="6.200" stroke-linecap="round"/><path d="M22 7C19 3.500 12 3.500 10.500 7.500M21.500 18C20 15 14 14 11 12" fill="none" stroke="#7aa7e0" stroke-width="1.800" stroke-linecap="round"/><path d="M1 30l29-26" stroke="#e01a1a" stroke-width="2.400"/></g>
<g transform="translate(456.95 71.3) scale(0.4156)"><path d="M3 9l7-6h19v19l-7 7h-19z" fill="#e01a1a" stroke="#7a0000" stroke-width="1.200"/><path d="M3 9l7-6h19l-7 6z" fill="#f24a4a"/><path d="M22 9l7-6v19l-7 7z" fill="#b81010"/><path d="M3 9h19v20M22 9l7-6" fill="none" stroke="#7a0000" stroke-width="1"/><path d="M22 9v20M3 29h19l7-7" stroke="#3b6fb8" stroke-width="1.800" fill="none"/><circle cx="22" cy="9" r="2.400" fill="#3b6fb8"/><circle cx="3" cy="29" r="2.400" fill="#3b6fb8"/><circle cx="22" cy="29" r="2.400" fill="#3b6fb8"/><circle cx="29" cy="22" r="2.400" fill="#3b6fb8"/></g>
<path d="M475.8 77.3h3.4l-1.7 1.9z" fill="#111"/>
<line x1="482.3" y1="71" x2="482.3" y2="84.5" stroke="#d2d2d2" stroke-width="0.7"/>
<g transform="translate(488.2 71.3) scale(0.4156)"><path d="M1 14l7-5l6 3l6-7l11 5v20l-14 1l-16-5z" fill="#3b6fb8" stroke="#12305c" stroke-width="1.200"/><path d="M1 14l7-5l6 3l6-7l11 5l-14 9z" fill="#5b8fd4"/><path d="M3.5 7v6a3.5 1.75 0 0 0 7.0 0v-6z" fill="#3b6fb8" stroke="#12305c" stroke-width=".8"/><ellipse cx="7" cy="7" rx="3.5" ry="1.75" fill="#6f9ad8" stroke="#12305c" stroke-width=".8"/><path d="M2 29l10-9" stroke="#e01a1a" stroke-width="2.200" stroke-dasharray="3 1.500"/><path d="M13 14v10a7 3.5 0 0 0 14 0v-10z" fill="#ecd41c" stroke="#6a5c00" stroke-width=".8"/><ellipse cx="20" cy="14" rx="7" ry="3.5" fill="#fff27a" stroke="#6a5c00" stroke-width=".8"/></g>
<g transform="translate(506.6 71.3) scale(0.4156)"><path d="M1 17l22-14l8 4v22l-16 2l-14-5z" fill="#3b6fb8" stroke="#12305c" stroke-width="1.200"/><path d="M1 17l22-14l8 4l-16 15z" fill="#5b8fd4"/><path d="M1 17l14 5v9M15 22l16-15" fill="none" stroke="#12305c" stroke-width="1"/><path d="M4.2 17v3a2.8 1.4 0 0 0 5.6 0v-3z" fill="#1f4a80" stroke="#12305c" stroke-width=".8"/><ellipse cx="7" cy="17" rx="2.8" ry="1.4" fill="#2a5aa0" stroke="#12305c" stroke-width=".8"/><path d="M11 14v3.5a3 1.5 0 0 0 6 0v-3.5z" fill="#ecd41c" stroke="#6a5c00" stroke-width=".8"/><ellipse cx="14" cy="14" rx="3" ry="1.5" fill="#fff27a" stroke="#6a5c00" stroke-width=".8"/><path d="M18 11v3.5a3 1.5 0 0 0 6 0v-3.5z" fill="#ecd41c" stroke="#6a5c00" stroke-width=".8"/><ellipse cx="21" cy="11" rx="3" ry="1.5" fill="#fff27a" stroke="#6a5c00" stroke-width=".8"/><path d="M24.9 8v3.5a2.6 1.3 0 0 0 5.2 0v-3.5z" fill="#ecd41c" stroke="#6a5c00" stroke-width=".8"/><ellipse cx="27.5" cy="8" rx="2.6" ry="1.3" fill="#fff27a" stroke="#6a5c00" stroke-width=".8"/></g>
<g transform="translate(525 71.3) scale(0.4156)"><path d="M1 17l15-13l15 4v21l-16 2l-14-5z" fill="#3b6fb8" stroke="#12305c" stroke-width="1.200"/><path d="M1 17l15-13l15 4l-16 14z" fill="#5b8fd4"/><path d="M1 17l14 5v9" fill="none" stroke="#12305c" stroke-width="1"/><path d="M14 6v3a3 1.5 0 0 0 6 0v-3z" fill="#ecd41c" stroke="#6a5c00" stroke-width=".8"/><ellipse cx="17" cy="6" rx="3" ry="1.5" fill="#fff27a" stroke="#6a5c00" stroke-width=".8"/><path d="M22 9v3a3 1.5 0 0 0 6 0v-3z" fill="#ecd41c" stroke="#6a5c00" stroke-width=".8"/><ellipse cx="25" cy="9" rx="3" ry="1.5" fill="#fff27a" stroke="#6a5c00" stroke-width=".8"/><path d="M7 11v3a3 1.5 0 0 0 6 0v-3z" fill="#ecd41c" stroke="#6a5c00" stroke-width=".8"/><ellipse cx="10" cy="11" rx="3" ry="1.5" fill="#fff27a" stroke="#6a5c00" stroke-width=".8"/><path d="M23 17v3a3 1.5 0 0 0 6 0v-3z" fill="#ecd41c" stroke="#6a5c00" stroke-width=".8"/><ellipse cx="26" cy="17" rx="3" ry="1.5" fill="#fff27a" stroke="#6a5c00" stroke-width=".8"/><path d="M6 19v3a3 1.5 0 0 0 6 0v-3z" fill="#ecd41c" stroke="#6a5c00" stroke-width=".8"/><ellipse cx="9" cy="19" rx="3" ry="1.5" fill="#fff27a" stroke="#6a5c00" stroke-width=".8"/><path d="M15 21v3a3 1.5 0 0 0 6 0v-3z" fill="#ecd41c" stroke="#6a5c00" stroke-width=".8"/><ellipse cx="18" cy="21" rx="3" ry="1.5" fill="#fff27a" stroke="#6a5c00" stroke-width=".8"/></g>
<g transform="translate(543.4 71.3) scale(0.4156)"><path d="M1 19l12-9l18 6v14l-16 1l-14-5z" fill="#3b6fb8" stroke="#12305c" stroke-width="1.200"/><path d="M1 19l14 5v7" fill="none" stroke="#12305c" stroke-width="1"/><path d="M4 8v5a4 2.0 0 0 0 8 0v-5z" fill="#ecd41c" stroke="#6a5c00" stroke-width=".8"/><ellipse cx="8" cy="8" rx="4" ry="2.0" fill="#fff27a" stroke="#6a5c00" stroke-width=".8"/><path d="M14 6v9a7 3.5 0 0 0 14 0v-9z" fill="#ecd41c" stroke="#6a5c00" stroke-width=".8"/><ellipse cx="21" cy="6" rx="7" ry="3.5" fill="#fff27a" stroke="#6a5c00" stroke-width=".8"/><path d="M7.5 19v4a3.5 1.75 0 0 0 7.0 0v-4z" fill="#ecd41c" stroke="#6a5c00" stroke-width=".8"/><ellipse cx="11" cy="19" rx="3.5" ry="1.75" fill="#fff27a" stroke="#6a5c00" stroke-width=".8"/><path d="M19 22v5a5 2.5 0 0 0 10 0v-5z" fill="#ecd41c" stroke="#6a5c00" stroke-width=".8"/><ellipse cx="24" cy="22" rx="5" ry="2.5" fill="#fff27a" stroke="#6a5c00" stroke-width=".8"/></g>
<line x1="561.5" y1="71" x2="561.5" y2="84.5" stroke="#d2d2d2" stroke-width="0.7"/>
<g transform="translate(565.55 71.3) scale(0.4156)"><path d="M1 13c2-8 9-12 18-11l12 6v13l-14 9l-16-5z" fill="#3b6fb8" stroke="#12305c" stroke-width="1.200"/><path d="M17 30v-10l14-12v13z" fill="#2f60a8" stroke="#12305c" stroke-width=".8"/><path d="M1 13c2-8 9-12 18-11l12 6c-8-1-13 3-14 12l-16-5z" fill="#e01a1a" stroke="#7a0000" stroke-width="1"/><path d="M4 11c3-5 8-7 14-7" stroke="#f46a6a" stroke-width="1.600" fill="none"/></g>
<g transform="translate(583.95 71.3) scale(0.4156)"><path d="M1 18l16-16l14 6v13l-14 9l-16-5z" fill="#3b6fb8" stroke="#12305c" stroke-width="1.200"/><path d="M17 30v-8l14-14v13z" fill="#2f60a8" stroke="#12305c" stroke-width=".8"/><path d="M1 18l16-16l14 6l-14 14z" fill="#e01a1a" stroke="#7a0000" stroke-width="1"/></g>
<g transform="translate(602.35 71.3) scale(0.4156)"><path d="M2 8l14-7l14 7v16l-14 7.500l-14-7.500z" fill="#3b6fb8" stroke="#12305c" stroke-width="1.300"/><path d="M2 8l14 6l14-6l-14-7z" fill="#6f9ad8" stroke="#12305c" stroke-width=".8"/><path d="M5 12.500l9 4v11l-9-5z" fill="#e01a1a"/><path d="M27 12.500l-9 4v11l9-5z" fill="#d01414"/><path d="M16 14v17" stroke="#12305c" stroke-width="1.200"/></g>
<g transform="translate(620.75 71.3) scale(0.4156)"><path d="M3 3l20-2l7 4v21l-9 5l-18-5z" fill="#3b6fb8" stroke="#12305c" stroke-width="1.200"/><path d="M7 6l16-1.500v20l-14 3z" fill="#e01a1a" stroke="#7a0000" stroke-width="1"/><path d="M13 8v15l10 1.500v-20z" fill="#c01010"/><path d="M7 6l6 2v15l-4 4.500" fill="none" stroke="#7a0000" stroke-width="1"/><path d="M13 23l10 1.500l-14 3z" fill="#f24a4a"/></g>
<line x1="639.6" y1="71" x2="639.6" y2="84.5" stroke="#d2d2d2" stroke-width="0.7"/>
<g transform="translate(643.95 71.3) scale(0.4156)"><defs><radialGradient id="gsp" cx=".35" cy=".3" r=".8"><stop offset="0" stop-color="#7aa7e0"/><stop offset=".5" stop-color="#3b6fb8"/><stop offset="1" stop-color="#234a88"/></radialGradient></defs><circle cx="21" cy="11" r="10.500" fill="url(#gsp)" stroke="#1f4a80" stroke-width=".8"/><circle cx="10.500" cy="19.500" r="10.500" fill="url(#gsp)" stroke="#1f4a80" stroke-width=".8"/></g>
<line x1="660.5" y1="66" x2="660.5" y2="87.3" stroke="#fdfdfd" stroke-width="0.8"/>
<line x1="663" y1="69.5" x2="663" y2="85.5" stroke="#bcbcbc" stroke-width="0.8" stroke-dasharray="0.8 0.8"/>
<g transform="translate(669.15 71.3) scale(0.4156)"><path d="M1 5a4 4 0 0 1 4-3l13-1l7 4v17l-5 5l-16-1a3 3 0 0 1-3-3z" fill="#b0b0b0" stroke="#303030" stroke-width="1.500"/><path d="M20 6v21M20 6l5-1" fill="none" stroke="#4a4a4a" stroke-width="1"/><path d="M20 6l5-1v17l-5 5z" fill="#808080"/><circle cx="10.500" cy="14.500" r="7.500" fill="#707070" stroke="#2a2a2a" stroke-width="1.200"/><path d="M3.500 14.500a7 7 0 0 1 14 0z" fill="#f4dc20" stroke="#5e5200" stroke-width=".8"/><path d="M4 16.500h13" stroke="#e8e8e8" stroke-width="1.500"/><path d="M16 24l12 5.500l1.500-3.500" fill="none" stroke="#5e5200" stroke-width="3.600"/><path d="M16 24l12 5.500l1.500-3.500" fill="none" stroke="#f0d418" stroke-width="2.400"/></g>
<g transform="translate(687.55 71.3) scale(0.4156)"><path d="M1 5a4 4 0 0 1 4-3l13-1l7 4v17l-5 5l-16-1a3 3 0 0 1-3-3z" fill="#b0b0b0" stroke="#303030" stroke-width="1.500"/><path d="M20 6v21M20 6l5-1" fill="none" stroke="#4a4a4a" stroke-width="1"/><path d="M20 6l5-1v17l-5 5z" fill="#808080"/><circle cx="10.500" cy="14.500" r="7.500" fill="#707070" stroke="#2a2a2a" stroke-width="1.200"/><path d="M3.500 14.500a7 7 0 0 1 14 0z" fill="#f4dc20" stroke="#5e5200" stroke-width=".8"/><path d="M4 16.500h13" stroke="#e8e8e8" stroke-width="1.500"/><path d="M16 24l12 5.500l1.500-3.500" fill="none" stroke="#5e5200" stroke-width="3.600"/><path d="M16 24l12 5.500l1.500-3.500" fill="none" stroke="#f0d418" stroke-width="2.400"/><path d="M3 2l6 25l21-10" fill="none" stroke="#c81414" stroke-width="2.800"/><path d="M3 2l17 1l10 14" fill="none" stroke="#2a4f9c" stroke-width="2.800"/></g>
<line x1="705.5" y1="71" x2="705.5" y2="84.5" stroke="#d2d2d2" stroke-width="0.7"/>
<g transform="translate(710.1 71.3) scale(0.4156)"><path d="M1 5a4 4 0 0 1 4-3l13-1l7 4v17l-5 5l-16-1a3 3 0 0 1-3-3z" fill="#b0b0b0" stroke="#303030" stroke-width="1.500"/><path d="M20 6v21M20 6l5-1" fill="none" stroke="#4a4a4a" stroke-width="1"/><path d="M20 6l5-1v17l-5 5z" fill="#808080"/><circle cx="10.500" cy="14.500" r="7.500" fill="#707070" stroke="#2a2a2a" stroke-width="1.200"/><path d="M3.500 14.500a7 7 0 0 1 14 0z" fill="#f4dc20" stroke="#5e5200" stroke-width=".8"/><path d="M4 16.500h13" stroke="#e8e8e8" stroke-width="1.500"/><path d="M16 24l12 5.500l1.500-3.500" fill="none" stroke="#5e5200" stroke-width="3.600"/><path d="M16 24l12 5.500l1.500-3.500" fill="none" stroke="#f0d418" stroke-width="2.400"/><path d="M20 3a6.500 6.500 0 1 1-1 12" fill="none" stroke="#4a8ad8" stroke-width="3.600"/><path d="M15 3l7-3.500v7z" fill="#4a8ad8"/><path d="M24 17l-7 2l2-6.500z" fill="#4a8ad8"/></g>
<g transform="translate(728.5 71.3) scale(0.4156)"><path d="M1 5a4 4 0 0 1 4-3l13-1l7 4v17l-5 5l-16-1a3 3 0 0 1-3-3z" fill="#b0b0b0" stroke="#303030" stroke-width="1.500"/><path d="M20 6v21M20 6l5-1" fill="none" stroke="#4a4a4a" stroke-width="1"/><path d="M20 6l5-1v17l-5 5z" fill="#808080"/><circle cx="10.500" cy="14.500" r="7.500" fill="#707070" stroke="#2a2a2a" stroke-width="1.200"/><path d="M3.500 14.500a7 7 0 0 1 14 0z" fill="#f4dc20" stroke="#5e5200" stroke-width=".8"/><path d="M4 16.500h13" stroke="#e8e8e8" stroke-width="1.500"/><path d="M16 24l12 5.500l1.500-3.500" fill="none" stroke="#5e5200" stroke-width="3.600"/><path d="M16 24l12 5.500l1.500-3.500" fill="none" stroke="#f0d418" stroke-width="2.400"/><path d="M2 17l13 14M15 17l-13 14" stroke="#d01010" stroke-width="3.800"/></g>
<text x="763.0" y="80.6" font-size="6.5" fill="#222">»</text>
</g>
<g id="view3d">
<rect x="163" y="87.9" width="605" height="288.8" fill="url(#bg3d)"/>
<polygon points="289.3,139.3 280.7,150.2 260.6,269.5 269.2,258.6" fill="#292929"/>
<polygon points="269.2,258.6 260.6,269.5 505.7,315.2 514.3,304.3" fill="#2b2b2b"/>
<clipPath id="hole"><polygon points="295.5,149.2 523.6,190.7 507.4,293.2 280.0,251.3"/></clipPath>
<polygon points="295.5,149.2 523.6,190.7 507.4,293.2 280.0,251.3" fill="#292929"/>
<polygon points="287.9,160.0 516.0,201.5 499.8,304.0 272.4,262.1" fill="#efffef" clip-path="url(#hole)"/>
<path d="M289.3 139.3 L534.4 182.8 L514.3 304.3 L269.2 258.6Z M295.5 149.2 L523.6 190.7 L507.4 293.2 L280.0 251.3Z" fill="#d7d7d7" fill-rule="evenodd" stroke="#1a1a1a" stroke-width="0.35"/>
<rect x="281.9" y="153.8" width="245.9" height="145.3" fill="none" stroke="#f58220" stroke-width="2"/>
<g id="axiscross">
<path d="M753.8 362.7L763.6 363.4" stroke="#d81818" stroke-width="0.8"/>
<path d="M760.2 362.1l3.800 1.300l-3.900 1z" fill="#d81818"/>
<path d="M753.8 362.7L752.9 371.3" stroke="#18c018" stroke-width="0.9"/>
<path d="M751.9 368.2l1 3.600l1.600-3.400z" fill="#18c018"/>
<circle cx="753.7" cy="362.6" r="0.8" fill="#2020e0"/>
<text x="764.8" y="363.8" font-size="3.6" fill="#222">X</text>
<text x="754.2" y="372.6" font-size="3.6" fill="#222">Y</text>
<text x="754.6" y="361.9" font-size="3.6" fill="#222">Z</text>
</g>
<g id="navcube">
<g transform="translate(739.5 116.5) rotate(9)">
<rect x="-13.8" y="-13.6" width="27.6" height="27.2" rx="5" fill="#c2c2d6" stroke="#9a9ab2" stroke-width="0.6"/>
<rect x="-10.8" y="-10.6" width="21.6" height="21.2" rx="2.5" fill="#d6d6e6" stroke="#e4e4f0" stroke-width="0.5"/>
<text x="-7.6" y="3.1" font-size="7.6" font-weight="bold" fill="#000" stroke="#000" stroke-width="0.35" textLength="17.8" lengthAdjust="spacingAndGlyphs">BOTTOM</text>
</g>
<path d="M729.4 98.5L749.6 102.5" stroke="#e01010" stroke-width="1.1" fill="none"/>
<path d="M729.4 98.5L725 126" stroke="#18d018" stroke-width="1.1" fill="none"/>
<path d="M729.4 98.5L728.6 104" stroke="#1818e8" stroke-width="1.1" fill="none"/>
<path d="M739.7 91.2l4.300 4.400h-8.600z" fill="#9696b6"/>
<path d="M739.4 142.3l4.200-4.600h-8.400z" fill="#9696b6"/>
<path d="M714.3 117.2l3-3.600v7.200z" fill="#9696b6"/>
<path d="M765.3 117.2l-3.800-4.400v8.800z" fill="#9696b6"/>
<path d="M732.5 94.3A23.3 23.3 0 0 0 722.2 100.9" stroke="#9696b6" stroke-width="2.800" fill="none"/>
<polygon points="719.3,104.900 724.6,103 719.8,98.700" fill="#9696b6"/>
<path d="M746.5 94.3A23.3 23.3 0 0 1 756.8 100.9" stroke="#9696b6" stroke-width="2.800" fill="none"/>
<polygon points="759.7,104.900 754.4,103 759.2,98.700" fill="#9696b6"/>
<path d="M748.9 135.800l3.700-1.800l3.700 1.800v3.800l-3.700 1.800l-3.700-1.800z" fill="#9c9cb4" stroke="#8888a2" stroke-width="0.4"/>
<path d="M748.9 135.800l3.700 1.600l3.700-1.600M752.600 137.400v4" fill="none" stroke="#8484a0" stroke-width="0.4"/>
<rect x="716.1" y="93.7" width="45.3" height="51.8" fill="none" stroke="#f58220" stroke-width="2"/>
</g>
</g>
<g id="mditabs">
<rect x="163" y="376.3" width="605" height="14" fill="#f0f0f0"/>
<rect x="164.5" y="376.5" width="67" height="12.8" fill="#f0f0f0" stroke="#dcdcdc" stroke-width="0.5"/>
<rect x="231.5" y="376.3" width="81.3" height="13.7" fill="#ffffff" stroke="#dcdcdc" stroke-width="0.5"/>
<g transform="translate(170.8 377.6) scale(0.3063)"><path d="M1 1h19v6.500h-12v5h8v6h-8v11.500h-7z" fill="#c41414"/><g transform="translate(21 21)"><circle r="7.800" fill="#2f5fa8"/><path d="M0-10.500v21M-10.500 0h21M-7.400-7.400l14.800 14.800M7.400-7.400l-14.800 14.800" stroke="#2f5fa8" stroke-width="3.400"/><circle r="3.400" fill="#fff"/></g></g>
<text x="182.5" y="385.7" font-size="7.2" fill="#000" textLength="30.2" lengthAdjust="spacingAndGlyphs">Start page</text>
<rect x="215.8" y="379.3" width="7" height="7" fill="#d8d8d8" stroke="#c0c0c0" stroke-width="0.4"/>
<path d="M217.6 381.100l3.400 3.400M221 381.100l-3.400 3.400" stroke="#fff" stroke-width="0.8" fill="none"/>
<g transform="translate(239.8 377.6) scale(0.3063)"><path d="M1 1h19v6.500h-12v5h8v6h-8v11.500h-7z" fill="#c41414"/><g transform="translate(21 21)"><circle r="7.800" fill="#2f5fa8"/><path d="M0-10.500v21M-10.500 0h21M-7.400-7.400l14.800 14.800M7.400-7.400l-14.800 14.800" stroke="#2f5fa8" stroke-width="3.400"/><circle r="3.400" fill="#fff"/></g></g>
<text x="251.5" y="385.7" font-size="7.2" fill="#000" textLength="41.5" lengthAdjust="spacingAndGlyphs">Unnamed : 1*</text>
<rect x="296.3" y="379.3" width="7" height="7" fill="#e8693c" stroke="#d05028" stroke-width="0.4"/>
<path d="M298.100 381.100l3.400 3.400M301.500 381.100l-3.400 3.400" stroke="#fff" stroke-width="0.9" fill="none"/>
</g>
<g id="comboview">
<rect x="0" y="88" width="163" height="302.5" fill="#f0f0f0"/>
<rect x="0.6" y="88.3" width="160" height="11.7" fill="#e1e1e1"/>
<rect x="160.6" y="88" width="2.4" height="302" fill="#f7f7f7"/>
<text x="3.0" y="97.6" font-size="7.2" fill="#000" textLength="38.8" lengthAdjust="spacingAndGlyphs">Combo View</text>
<path d="M139.200 94.500h3v3h-3z M140.400 94.500v-1.200h3v3h-1.200" fill="none" stroke="#222" stroke-width="0.7"/>
<path d="M151.700 93l4.200 4.200M155.900 93l-4.200 4.200" fill="none" stroke="#222" stroke-width="1"/>
<rect x="33" y="103.6" width="29" height="11" fill="#f0f0f0" stroke="#d9d9d9" stroke-width="0.5"/>
<rect x="0.9" y="102" width="32.1" height="13" fill="#ffffff" stroke="#d9d9d9" stroke-width="0.5"/>
<rect x="1.2" y="113" width="31.5" height="2.2" fill="#ffffff"/>
<text x="7.5" y="109.8" font-size="7.2" fill="#000" textLength="17.1" lengthAdjust="spacingAndGlyphs">Model</text>
<text x="39.3" y="110.6" font-size="7.2" fill="#000" textLength="16.4" lengthAdjust="spacingAndGlyphs">Tasks</text>
<rect x="1.3" y="114.6" width="156.8" height="125.6" fill="#ffffff" stroke="#c4c4c4" stroke-width="0.5"/>
<text x="4.4" y="125.4" font-size="7.2" fill="#000" textLength="60.6" lengthAdjust="spacingAndGlyphs">Labels &amp; Attributes</text>
<text x="99.0" y="125.4" font-size="7.2" fill="#000" textLength="36.0" lengthAdjust="spacingAndGlyphs">Description</text>
<line x1="96.7" y1="116" x2="96.7" y2="130" stroke="#e5e5e5" stroke-width="0.6"/>
<line x1="156.5" y1="116" x2="156.5" y2="130" stroke="#e5e5e5" stroke-width="0.6"/>
<text x="4.0" y="137.5" font-size="7.2" fill="#000" textLength="35.6" lengthAdjust="spacingAndGlyphs">Application</text>
<rect x="26" y="165" width="70.7" height="11.3" fill="#e3e3fc"/>
<rect x="38" y="225.5" width="118.7" height="11" fill="#d9d9d9"/>
<path d="M5.4 145.5l2.500 2.500l2.500-2.500" fill="none" stroke="#2e2e2e" stroke-width="1.1"/>
<g transform="translate(16.1 142.4) scale(0.2687)"><path d="M4 2h19l6 6v23h-25z" fill="#f2f2f2" stroke="#8a8a8a" stroke-width="1.500"/><path d="M7 17l8-5l11 4v10l-8 5l-11-4z" fill="#3b6fb8" stroke="#12305c" stroke-width="1.200"/><path d="M7 17l8-5l11 4l-8 5z" fill="#6f9ad8"/><circle cx="19" cy="9" r="5.500" fill="#e01a1a" stroke="#7a0000" stroke-width="1"/></g>
<text x="28.8" y="149.2" font-size="7.2" fill="#000" font-weight="bold" textLength="32.2" lengthAdjust="spacingAndGlyphs">Unnamed</text>
<path d="M18.4 156.29999999999998l2.600 2.400l-2.600 2.400" fill="none" stroke="#8c8c8c" stroke-width="1"/>
<g transform="translate(28.2 154.4) scale(0.2562)"><path d="M3 8l8-5l6 2.500v7l7-4l6 3v11l-14 8l-13-6z" fill="#3a6cb4" stroke="#12305c" stroke-width="1.400"/><path d="M3 8l6 3l8-5.500M9 11v7l7 3.500l8-4.500M16 21.500v9M9 18l8-5.500" fill="none" stroke="#12305c" stroke-width="1.100"/><path d="M3 8l8-5l6 2.500l-8 5.500z" fill="#78a4e0"/><path d="M9 18l8-5.500l7-4l6 3l-14 10z" fill="#6f9ad8"/></g>
<text x="40.5" y="161.2" font-size="7.2" fill="#000" textLength="16.0" lengthAdjust="spacingAndGlyphs">Body</text>
<path d="M17.4 169.3l2.500 2.500l2.500-2.500" fill="none" stroke="#2e2e2e" stroke-width="1.1"/>
<g transform="translate(28.2 166.4) scale(0.2562)"><path d="M3 8l8-5l6 2.500v7l7-4l6 3v11l-14 8l-13-6z" fill="#3a6cb4" stroke="#12305c" stroke-width="1.400"/><path d="M3 8l6 3l8-5.500M9 11v7l7 3.500l8-4.500M16 21.500v9M9 18l8-5.500" fill="none" stroke="#12305c" stroke-width="1.100"/><path d="M3 8l8-5l6 2.500l-8 5.500z" fill="#78a4e0"/><path d="M9 18l8-5.500l7-4l6 3l-14 10z" fill="#6f9ad8"/></g>
<text x="40.5" y="173.1" font-size="7.2" fill="#000" font-weight="bold" textLength="29.5" lengthAdjust="spacingAndGlyphs">Body001</text>
<path d="M30.5 180.6l2.600 2.400l-2.600 2.400" fill="none" stroke="#8c8c8c" stroke-width="1"/>
<g transform="translate(40 178.3) scale(0.2812)"><path d="M12 20v-18M12 20l-9 9M12 20l18 1" stroke="#5a5a5a" stroke-width="3.200" fill="none"/></g>
<text x="52.7" y="185.5" font-size="7.2" fill="#979797" textLength="30.8" lengthAdjust="spacingAndGlyphs">Origin001</text>
<path d="M30.5 192.6l2.600 2.400l-2.600 2.400" fill="none" stroke="#8c8c8c" stroke-width="1"/>
<g transform="translate(40 190.3) scale(0.2812)"><path d="M2 23l13-5l15 4l-13 7z" fill="none" stroke="#8e8e8e" stroke-width="2.600"/><path d="M2 7l13-5.500l15 4.500v9l-13 7l-15-5z" fill="#6e6e6e" stroke="#444" stroke-width="1.200"/><path d="M2 7l13-5.500l15 4.500l-13 6z" fill="#a8a8a8" stroke="#444" stroke-width=".8"/></g>
<text x="52.7" y="197.6" font-size="7.2" fill="#979797" textLength="11.3" lengthAdjust="spacingAndGlyphs">Pad</text>
<path d="M30.5 204.6l2.600 2.400l-2.600 2.400" fill="none" stroke="#8c8c8c" stroke-width="1"/>
<g transform="translate(40 202.3) scale(0.2812)"><path d="M1 15l18-10l12 5v9l-18 11l-12-6z" fill="#707070" stroke="#444" stroke-width="1.200"/><path d="M1 15l18-10l12 5l-18 10z" fill="#a6a6a6" stroke="#505050" stroke-width=".8"/><path d="M9 14l10-5.500l6 2.500l-10 6z" fill="#626262"/></g>
<text x="52.7" y="209.5" font-size="7.2" fill="#979797" textLength="20.8" lengthAdjust="spacingAndGlyphs">Pocket</text>
<path d="M30.5 216.6l2.600 2.400l-2.600 2.400" fill="none" stroke="#8c8c8c" stroke-width="1"/>
<g transform="translate(40 214.3) scale(0.2812)"><path d="M2 23l13-5l15 4l-13 7z" fill="none" stroke="#8e8e8e" stroke-width="2.600"/><path d="M2 7l13-5.500l15 4.500v9l-13 7l-15-5z" fill="#6e6e6e" stroke="#444" stroke-width="1.200"/><path d="M2 7l13-5.500l15 4.500l-13 6z" fill="#a8a8a8" stroke="#444" stroke-width=".8"/></g>
<text x="52.7" y="221.4" font-size="7.2" fill="#979797" textLength="22.8" lengthAdjust="spacingAndGlyphs">Pad001</text>
<g transform="translate(39.8 226.6) scale(0.2812)"><path d="M1 14l20-11l10 4v22l-16 2l-14-5z" fill="#2a66b4" stroke="#12305c" stroke-width="1.200"/><path d="M1 14l20-11l10 4l-16 13z" fill="#4a88d8"/><path d="M4 17h6v7h-6z" fill="#dfeaf8"/><path d="M12 13h5v6h-5z" fill="#dfeaf8"/><path d="M19 14h11v17h-11z" fill="#2fc040" stroke="#0a700a" stroke-width=".8"/><path d="M24.500 17v9M21.500 23l3 3.500l3-3.500" stroke="#e8ffe8" stroke-width="1.800" fill="none"/></g>
<text x="52.7" y="233.5" font-size="7.2" fill="#000" textLength="41.8" lengthAdjust="spacingAndGlyphs">LinearPattern</text>
<rect x="2.5" y="245.2" width="153" height="129.8" fill="#ffffff" stroke="#c4c4c4" stroke-width="0.5"/>
<text x="5.5" y="256.6" font-size="7.2" fill="#000" textLength="27.0" lengthAdjust="spacingAndGlyphs">Property</text>
<text x="65.3" y="256.6" font-size="7.2" fill="#000" textLength="17.2" lengthAdjust="spacingAndGlyphs">Value</text>
<line x1="62.9" y1="247" x2="62.9" y2="261" stroke="#e2e2e2" stroke-width="0.6"/>
<rect x="3.2" y="261.3" width="141.8" height="12.3" fill="#a0a0a0"/>
<text x="17.3" y="269.4" font-size="7.2" fill="#fff" font-weight="bold" textLength="15.2" lengthAdjust="spacingAndGlyphs">Base</text>
<rect x="3.2" y="274.0" width="11.6" height="12.7" fill="#e9e9e9"/>
<rect x="14.8" y="274.0" width="130.2" height="12.7" fill="#f6f6f6"/>
<line x1="14.8" y1="286.5" x2="145" y2="286.5" stroke="#e0e0e0" stroke-width="0.4"/>
<line x1="62.9" y1="274.0" x2="62.9" y2="286.7" stroke="#dcdcdc" stroke-width="0.6"/>
<text x="17.3" y="282.1" font-size="7.2" fill="#000" textLength="27.7" lengthAdjust="spacingAndGlyphs">Reversed</text>
<text x="65.3" y="282.1" font-size="7.2" fill="#000" textLength="13.7" lengthAdjust="spacingAndGlyphs">false</text>
<rect x="3.2" y="286.7" width="11.6" height="12.7" fill="#e9e9e9"/>
<rect x="14.8" y="286.7" width="130.2" height="12.7" fill="#ffffff"/>
<line x1="14.8" y1="299.2" x2="145" y2="299.2" stroke="#e0e0e0" stroke-width="0.4"/>
<line x1="62.9" y1="286.7" x2="62.9" y2="299.4" stroke="#dcdcdc" stroke-width="0.6"/>
<text x="17.3" y="294.8" font-size="7.2" fill="#000" textLength="21.2" lengthAdjust="spacingAndGlyphs">Length</text>
<text x="65.3" y="294.8" font-size="7.2" fill="#000" textLength="30.7" lengthAdjust="spacingAndGlyphs">36.00 mm</text>
<rect x="3.2" y="299.4" width="11.6" height="12.7" fill="#e9e9e9"/>
<rect x="14.8" y="299.4" width="130.2" height="12.7" fill="#f6f6f6"/>
<line x1="14.8" y1="311.90000000000003" x2="145" y2="311.90000000000003" stroke="#e0e0e0" stroke-width="0.4"/>
<line x1="62.9" y1="299.4" x2="62.9" y2="312.1" stroke="#dcdcdc" stroke-width="0.6"/>
<text x="17.3" y="307.5" font-size="7.2" fill="#000" textLength="38.4" lengthAdjust="spacingAndGlyphs">Occurrences</text>
<text x="65.3" y="307.5" font-size="7.2" fill="#000" textLength="3.3" lengthAdjust="spacingAndGlyphs">4</text>
<rect x="3.2" y="312.1" width="11.6" height="12.7" fill="#e9e9e9"/>
<rect x="14.8" y="312.1" width="130.2" height="12.7" fill="#ffffff"/>
<line x1="14.8" y1="324.6" x2="145" y2="324.6" stroke="#e0e0e0" stroke-width="0.4"/>
<line x1="62.9" y1="312.1" x2="62.9" y2="324.8" stroke="#dcdcdc" stroke-width="0.6"/>
<text x="17.3" y="320.2" font-size="7.2" fill="#000" textLength="27.7" lengthAdjust="spacingAndGlyphs">Originals</text>
<text x="65.3" y="320.2" font-size="7.2" fill="#000" textLength="22.2" lengthAdjust="spacingAndGlyphs">Pad001</text>
<rect x="3.2" y="324.8" width="11.6" height="12.7" fill="#e9e9e9"/>
<rect x="14.8" y="324.8" width="130.2" height="12.7" fill="#f6f6f6"/>
<line x1="14.8" y1="337.3" x2="145" y2="337.3" stroke="#e0e0e0" stroke-width="0.4"/>
<line x1="62.9" y1="324.8" x2="62.9" y2="337.5" stroke="#dcdcdc" stroke-width="0.6"/>
<text x="17.3" y="332.9" font-size="7.2" fill="#000" textLength="16.0" lengthAdjust="spacingAndGlyphs">Label</text>
<text x="65.3" y="332.9" font-size="7.2" fill="#000" textLength="41.2" lengthAdjust="spacingAndGlyphs">LinearPattern</text>
<rect x="3.2" y="337.5" width="141.8" height="12.3" fill="#a0a0a0"/>
<text x="17.3" y="345.6" font-size="7.2" fill="#fff" font-weight="bold" textLength="46.9" lengthAdjust="spacingAndGlyphs">Linear Pattern</text>
<rect x="3.2" y="350.2" width="11.6" height="12.7" fill="#e9e9e9"/>
<rect x="14.8" y="350.2" width="130.2" height="12.7" fill="#f6f6f6"/>
<line x1="14.8" y1="362.7" x2="145" y2="362.7" stroke="#e0e0e0" stroke-width="0.4"/>
<line x1="62.9" y1="350.2" x2="62.9" y2="362.9" stroke="#dcdcdc" stroke-width="0.6"/>
<text x="17.3" y="358.3" font-size="7.2" fill="#000" textLength="28.4" lengthAdjust="spacingAndGlyphs">Direction</text>
<text x="65.3" y="358.3" font-size="7.2" fill="#000" textLength="59.0" lengthAdjust="spacingAndGlyphs">Sketch002 [H_Axis]</text>
<rect x="3.2" y="362.9" width="141.8" height="11.2" fill="#a0a0a0"/>
<text x="17.3" y="371.0" font-size="7.2" fill="#fff" font-weight="bold" textLength="43.7" lengthAdjust="spacingAndGlyphs">Sketch Based</text>
<rect x="145" y="246.3" width="9.8" height="128.4" fill="#f0f0f0"/>
<rect x="145" y="260.3" width="9.8" height="92" fill="#cdcdcd"/>
<path d="M148.200 252.800l1.700-1.700l1.700 1.700" fill="none" stroke="#555" stroke-width="0.7"/>
<path d="M148.200 368.200l1.700 1.700l1.700-1.700" fill="none" stroke="#555" stroke-width="0.7"/>
<rect x="2.2" y="375" width="156" height="13.7" fill="#ffffff"/>
<rect x="2.2" y="375.2" width="26.1" height="12.2" fill="#f0f0f0" stroke="#dcdcdc" stroke-width="0.5"/>
<rect x="28.3" y="375" width="28.7" height="14" fill="#ffffff" stroke="#dcdcdc" stroke-width="0.5"/>
<line x1="28.5" y1="375" x2="57" y2="375" stroke="#ffffff" stroke-width="0.8"/>
<text x="8.3" y="384.2" font-size="7.2" fill="#000" textLength="13.7" lengthAdjust="spacingAndGlyphs">View</text>
<text x="36.5" y="384.8" font-size="7.2" fill="#000" textLength="13.7" lengthAdjust="spacingAndGlyphs">Data</text>
</g>
<g id="annot">
<rect x="24" y="66.9" width="19.9" height="21.9" fill="none" stroke="#f58220" stroke-width="2"/>
</g>
<g id="tooltip">
<rect x="37.3" y="91" width="71.4" height="11.8" fill="#9a9a9a" opacity="0.55"/>
<rect x="36.4" y="90.2" width="71.2" height="11.3" fill="#ffffff" stroke="#7e7e7e" stroke-width="0.5"/>
<text x="39.8" y="98.2" font-size="7.2" fill="#575757" textLength="63.2" lengthAdjust="spacingAndGlyphs">Create a new sketch</text>
</g>
<g id="statusbar">
<text x="3.8" y="402.8" font-size="7.2" fill="#000" textLength="62.7" lengthAdjust="spacingAndGlyphs">Create a new sketch</text>
<g transform="translate(651.5 395.5) scale(0.2656)"><path d="M5 12c3-9 15-11 21-4" fill="none" stroke="#333" stroke-width="3.400"/><path d="M27 20c-3 9-15 11-21 4" fill="none" stroke="#333" stroke-width="3.400"/><path d="M30 3v10h-10z" fill="#333"/><path d="M2 29v-10h10z" fill="#333"/><circle cx="5" cy="13" r="3.600" fill="#222"/><circle cx="27" cy="19" r="3.600" fill="#222"/></g>
<text x="662.5" y="402.6" font-size="7.2" fill="#000" textLength="20.1" lengthAdjust="spacingAndGlyphs">Gesture</text>
<path d="M685.0 399.40000000000003h3.4l-1.7 1.9z" fill="#111"/>
<line x1="693" y1="393" x2="693" y2="406" stroke="#d8d8d8" stroke-width="0.6"/>
<text x="696.4" y="402.6" font-size="7.2" fill="#000" textLength="69.6" lengthAdjust="spacingAndGlyphs">115.25 mm x 54.88 mm</text>
</g>
</svg>
</body></html>
